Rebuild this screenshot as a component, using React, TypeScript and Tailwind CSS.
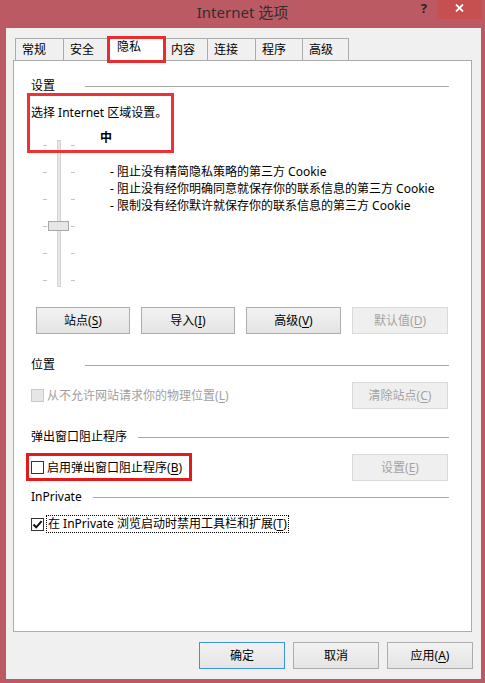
import React from "react";

type BtnProps = {
  text: string;
  accel?: string;
  disabled?: boolean;
  isDefault?: boolean;
  width: string;
};

function Accel({ text, accel }: { text: string; accel?: string }) {
  if (!accel) return <>{text}</>;
  return (
    <>
      {text}(<u className="underline-offset-2">{accel}</u>)
    </>
  );
}

function Button({ text, accel, disabled, isDefault, width }: BtnProps) {
  let look =
    "border-[#adadad] bg-linear-to-b from-[#f2f2f2] to-[#e4e4e4] text-black";
  if (disabled) look = "border-[#d9d9d9] bg-[#efefef] text-[#a3a3a3]";
  if (isDefault)
    look = "border-[#3c92e2] bg-linear-to-b from-[#f2f2f2] to-[#e4e4e4] text-black";
  return (
    <div
      className={`${width} h-[27px] border flex items-center justify-center leading-[16px] ${look}`}
    >
      <Accel text={text} accel={accel} />
    </div>
  );
}

function Checkbox({ checked, disabled }: { checked?: boolean; disabled?: boolean }) {
  return (
    <div
      className={`w-[13px] h-[13px] shrink-0 border flex items-center justify-center ${
        disabled ? "border-[#c9c9c9] bg-[#e6e6e6]" : "border-[#333333] bg-white"
      }`}
    >
      {checked && (
        <svg width="11" height="11" viewBox="0 0 11 11">
          <path d="M1.5 5.5 L4.2 8.3 L9.6 2.2" fill="none" stroke="#111" strokeWidth="2" />
        </svg>
      )}
    </div>
  );
}

function Header({ label }: { label: string }) {
  return (
    <div className="flex items-center h-[16px] gap-[11px] leading-[16px]">
      <span className="min-w-[43px] whitespace-nowrap">{label}</span>
      <div className="flex-1 h-px bg-[#a9a9a9]" />
    </div>
  );
}

const tabs = [
  { label: "常规", w: "w-[49px]" },
  { label: "安全", w: "w-[45px]" },
  { label: "隐私", w: "w-[58px]", active: true },
  { label: "内容", w: "w-[44px]" },
  { label: "连接", w: "w-[49px]" },
  { label: "程序", w: "w-[48px]" },
  { label: "高级", w: "w-[47px]" },
];

function Slider() {
  const ticks = [15, 42, 69, 96, 123, 150];
  return (
    <svg width="34" height="157" viewBox="0 0 34 157" className="ml-[11px] shrink-0">
      <rect x="15.5" y="10.5" width="3" height="146" fill="#e7e7e7" stroke="#d3d3d3" />
      {ticks.map((y) => (
        <g key={y}>
          <rect x="1" y={y} width="4" height="1" fill="#c4c4c4" />
          <rect x="29" y={y} width="4" height="1" fill="#c4c4c4" />
        </g>
      ))}
      <rect x="6.5" y="91.5" width="20" height="9" fill="#e6e6e6" stroke="#a8a8a8" />
    </svg>
  );
}

export default function App() {
  return (
    <div className="w-[485px] h-[683px] bg-[#bc5a63] flex flex-col text-[12px] text-black font-[family-name:'Noto_Sans','Noto_Sans_CJK_SC',sans-serif]">
      {/* title bar */}
      <div className="h-[28px] grid grid-cols-[1fr_auto_1fr] shrink-0">
        <div />
        <div className="pt-[2px] text-[15px] leading-[20px] text-[#2f2f2f]">Internet 选项</div>
        <div className="flex justify-end items-start">
          <span className="mr-[10px] text-[13px] leading-[17px] font-bold text-[#262626]">?</span>
          <div className="w-[45px] h-[19px] mr-[3px] bg-[#c64f50] flex justify-center pt-[4px]">
            <svg width="9" height="8" viewBox="0 0 9 8">
              <path d="M1 0.5 L8 7.5 M8 0.5 L1 7.5" stroke="white" strokeWidth="1.8" />
            </svg>
          </div>
        </div>
      </div>

      {/* client */}
      <div className="flex-1 ml-[6px] mr-[4px] mb-[4px] bg-[#f0f0f0] flex flex-col">
        <div className="mt-[9px] ml-[7px] pl-[2px] flex items-end">
          {tabs.map((t, i) =>
            t.active ? (
              <div
                key={t.label}
                className={`${t.w} relative z-10 -ml-px -mb-px h-[24px] bg-white border border-b-0 border-[#acacac] pl-[9px] pt-[1px] leading-[16px]`}
              >
                {t.label}
                <div className="absolute -left-px -top-[2px] w-[59px] h-[27px] border-[3px] border-[#ec2b2f]" />
              </div>
            ) : (
              <div
                key={t.label}
                className={`${t.w} ${i > 0 ? "-ml-px" : ""} h-[22px] bg-[#f0f0f0] border border-b-0 border-[#acacac] pl-[6px] pt-[3px] leading-[16px]`}
              >
                {t.label}
              </div>
            )
          )}
        </div>

        <div className="ml-[7px] w-[459px] h-[572px] shrink-0 border border-[#acacac] bg-white pl-[17px] pr-[22px] pt-[17px] flex flex-col">
          <Header label="设置" />
          <div className="relative mt-[11px] leading-[16px]">
            选择 Internet 区域设置。
            <div className="absolute -left-[4px] -top-[12px] w-[147px] h-[60px] border-[3px] border-[#ee3134]" />
          </div>

          <div className="mt-[9px] flex">
            <Slider />
            <div className="ml-[24px] flex flex-col">
              <div className="font-bold leading-[16px]">中</div>
              <div className="mt-[17px] ml-[10px] leading-[17px] whitespace-nowrap">
                <div>- 阻止没有精简隐私策略的第三方 Cookie</div>
                <div>- 阻止没有经你明确同意就保存你的联系信息的第三方 Cookie</div>
                <div>- 限制没有经你默许就保存你的联系信息的第三方 Cookie</div>
              </div>
            </div>
          </div>

          <div className="mt-[20px] ml-[5px] flex gap-[11px]">
            <Button text="站点" accel="S" width="w-[94px]" />
            <Button text="导入" accel="I" width="w-[94px]" />
            <Button text="高级" accel="V" width="w-[95px]" />
            <Button text="默认值" accel="D" width="w-[96px]" disabled />
          </div>

          <div className="mt-[23px]">
            <Header label="位置" />
          </div>
          <div className="mt-[9px] flex items-center justify-between">
            <div className="flex items-center gap-[3px] text-[#a0a0a0] leading-[16px]">
              <Checkbox disabled />
              <span>
                <Accel text="从不允许网站请求你的物理位置" accel="L" />
              </span>
            </div>
            <div className="mr-px">
              <Button text="清除站点" accel="C" width="w-[96px]" disabled />
            </div>
          </div>

          <div className="mt-[20px]">
            <Header label="弹出窗口阻止程序" />
          </div>
          <div className="mt-[9px] flex items-center justify-between">
            <div className="relative h-[27px] flex items-center gap-[3px] leading-[16px]">
              <Checkbox />
              <span>
                <Accel text="启用弹出窗口阻止程序" accel="B" />
              </span>
              <div className="absolute -left-[5px] -top-px w-[166px] h-[28px] border-[3px] border-[#e5191d]" />
            </div>
            <div className="mr-px">
              <Button text="设置" accel="E" width="w-[96px]" disabled />
            </div>
          </div>

          <div className="mt-[8px]">
            <Header label="InPrivate" />
          </div>
          <div className="mt-[10px] h-[18px] flex items-center gap-[2px]">
            <Checkbox checked />
            <span className="h-[18px] flex items-center px-[1px] border border-dotted border-black leading-[16px] whitespace-nowrap">
              <Accel text="在 InPrivate 浏览启动时禁用工具栏和扩展" accel="T" />
            </span>
          </div>
        </div>

        <div className="mt-[10px] pr-[8px] flex justify-end gap-[8px]">
          <Button text="确定" width="w-[86px]" isDefault />
          <Button text="取消" width="w-[86px]" />
          <Button text="应用" accel="A" width="w-[86px]" />
        </div>
      </div>
    </div>
  );
}
